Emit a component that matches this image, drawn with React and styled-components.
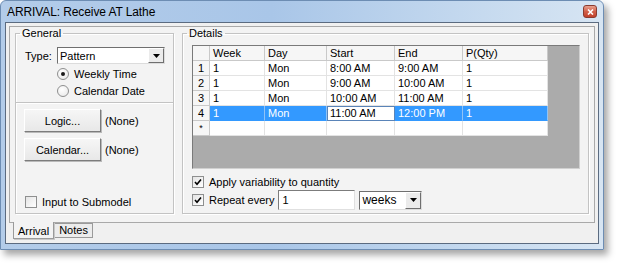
import React from 'react';
import styled, { createGlobalStyle } from 'styled-components';

const Global = createGlobalStyle`
  html, body { margin: 0; padding: 0; background: #ffffff; }
  body { font-family: "Liberation Sans", Arial, sans-serif; font-size: 11px; color: #000; }
  * { box-sizing: border-box; }
`;

const Page = styled.div`
  width: 617px;
  height: 264px;
  overflow: hidden;
`;

const Window = styled.div`
  width: 604px;
  height: 250px;
  display: flex;
  flex-direction: column;
  background: linear-gradient(90deg, #b3cce9 0%, #a9c6e8 45%, #c6daef 80%, #d7e5f3 100%);
  border: 1px solid #6d8db3;
  border-radius: 6px 6px 0 0;
  padding: 0 4px 5px 4px;
  box-shadow: 4px 5px 7px rgba(0, 0, 0, 0.35);
`;

const TitleBar = styled.div`
  height: 21px;
  display: flex;
  align-items: center;
  justify-content: space-between;
  padding: 0 2px 0 2px;
`;

const Title = styled.span`
  font-size: 12px;
  color: #000;
  letter-spacing: -0.1px;
`;

const CloseBtn = styled.div`
  width: 14px;
  height: 13px;
  border-radius: 3px;
  border: 1px solid #8a3b30;
  background: linear-gradient(180deg, #e8a08e 0%, #d2604a 50%, #c2412c 100%);
  display: flex;
  align-items: center;
  justify-content: center;
`;

const Client = styled.div`
  flex: 1;
  display: flex;
  flex-direction: column;
  background: #f0f0f0;
  border: 1px solid #5b6b80;
  padding: 3px 3px 0 3px;
`;

const Pane = styled.div`
  height: 197px;
  display: flex;
  gap: 8px;
  border: 1px solid #a9a9a9;
  background: #f3f3f3;
  padding: 0 5px 8px 5px;
`;

const Group = styled.fieldset`
  margin: 0;
  padding: 0;
  min-width: 0;
  border: 1px solid #c3c3c3;
  box-shadow: inset 1px 1px 0 #ffffff, 1px 1px 0 #ffffff;
  display: flex;
  flex-direction: column;
  width: ${p => p.$width ? `${p.$width}px` : 'auto'};
  flex: ${p => p.$width ? 'none' : '1'};
`;

const Legend = styled.legend`
  margin-left: 4px;
  padding: 0 2px;
  line-height: 13px;
  font-size: 11px;
`;

const GroupBody = styled.div`
  flex: 1;
  display: flex;
  flex-direction: column;
`;

const TypeRow = styled.div`
  margin-top: 7px;
  height: 17px;
  display: flex;
  align-items: center;
  padding-left: 9px;
`;

const FieldLabel = styled.span`
  width: 32px;
`;

const Combo = styled.div`
  width: ${p => p.$width}px;
  height: ${p => p.$height || 17}px;
  display: flex;
  align-items: center;
  background: #fff;
  border: 1px solid;
  border-color: #6f6f6f #dcdcdc #dcdcdc #6f6f6f;
  padding-left: 2px;
`;

const ComboText = styled.span`
  flex: 1;
  font-size: ${p => p.$size || 11}px;
`;

const ComboButton = styled.div`
  width: 16px;
  height: 100%;
  background: #ebebeb;
  border: 1px solid;
  border-color: #ffffff #6f6f6f #6f6f6f #ffffff;
  display: flex;
  align-items: center;
  justify-content: center;
`;

const Arrow = () => (
  <svg width="7" height="4" viewBox="0 0 7 4"><path d="M0 0H7L3.5 4Z" fill="#000" /></svg>
);

const RadioList = styled.div`
  margin-top: 1px;
  padding-left: 41px;
  display: flex;
  flex-direction: column;
`;

const OptionRow = styled.label`
  height: 17px;
  display: flex;
  align-items: center;
  gap: ${p => p.$gap || 5}px;
`;

const RadioDot = styled.span`
  width: 12px;
  height: 12px;
  border-radius: 50%;
  border: 1px solid #8e8f8f;
  background: radial-gradient(circle at 40% 35%, #ffffff 0%, #e6e6e6 100%);
  display: flex;
  align-items: center;
  justify-content: center;
  &::after {
    content: '';
    width: 4px;
    height: 4px;
    border-radius: 50%;
    background: ${p => p.$on ? '#1a1a1a' : 'transparent'};
  }
`;

const Separator = styled.div`
  margin-top: 3px;
  height: 2px;
  border-top: 1px solid #c3c3c3;
  border-bottom: 1px solid #ffffff;
`;

const ButtonRow = styled.div`
  margin-top: ${p => p.$top}px;
  padding-left: 8px;
  display: flex;
  align-items: center;
  gap: 4px;
`;

const PushButton = styled.div`
  width: 77px;
  height: 23px;
  display: flex;
  align-items: center;
  justify-content: center;
  background: linear-gradient(180deg, #f6f6f6 0%, #e8e8e8 100%);
  border: 1px solid;
  border-color: #ffffff #7c7c7c #7c7c7c #ffffff;
  box-shadow: 1px 1px 0 #b9b9b9;
`;

const Spacer = styled.div`
  flex: 1;
`;

const CheckRow = styled.label`
  height: 14px;
  display: flex;
  align-items: center;
  gap: 5px;
  padding-left: ${p => p.$left || 0}px;
  margin-bottom: ${p => p.$bottom || 0}px;
  margin-top: ${p => p.$top || 0}px;
`;

const CheckBox = styled.span`
  width: 12px;
  height: 12px;
  border: 1px solid #8e8f8f;
  background: linear-gradient(135deg, #e4e4e4 0%, #ffffff 100%);
  display: flex;
  align-items: center;
  justify-content: center;
`;

const Tick = () => (
  <svg width="8" height="8" viewBox="0 0 8 8"><path d="M1 4L3 6.2L7 1.5" stroke="#000" strokeWidth="1.6" fill="none" /></svg>
);

const GridFrame = styled.div`
  margin: 5px 8px 0 9px;
  height: 124px;
  background: #ababab;
  border: 1px solid;
  border-color: #7a7a7a #d0d0d0 #d0d0d0 #7a7a7a;
`;

const Table = styled.div`
  width: 355px;
  display: grid;
  grid-template-columns: 17px 55px 62px 68px 68px 85px;
  grid-auto-rows: 15px;
  background: #fff;
`;

const HeadCell = styled.div`
  background: #f6f6f6;
  border-right: 1px solid #c9c9c9;
  border-bottom: 1px solid #c9c9c9;
  padding-left: 3px;
  line-height: 14px;
  white-space: nowrap;
`;

const RowHead = styled.div`
  background: #f6f6f6;
  border-right: 1px solid #c9c9c9;
  border-bottom: 1px solid #c9c9c9;
  text-align: center;
  line-height: 14px;
  font-size: ${p => p.$small ? 9 : 11}px;
`;

const Cell = styled.div`
  border-right: 1px solid ${p => p.$selected ? '#8fc3f7' : '#e3e3e3'};
  border-bottom: 1px solid ${p => p.$selected ? '#3399ff' : '#e3e3e3'};
  background: ${p => p.$selected ? '#3399ff' : '#fff'};
  color: ${p => p.$selected ? '#fff' : '#000'};
  padding-left: 3px;
  line-height: 14px;
  white-space: nowrap;
  ${p => p.$editing && `
    border: 1px solid #5a84b8;
    padding-left: 2px;
    line-height: 13px;
  `}
`;

const RepeatRow = styled.div`
  margin-top: 1px;
  height: 20px;
  display: flex;
  align-items: center;
`;

const TextBox = styled.div`
  width: 77px;
  height: 20px;
  margin-left: 4px;
  background: #fff;
  border: 1px solid;
  border-color: #7c7c7c #e0e0e0 #e0e0e0 #7c7c7c;
  padding-left: 3px;
  line-height: 18px;
`;

const TabStrip = styled.div`
  display: flex;
  align-items: flex-start;
  padding-left: 4px;
`;

const Tab = styled.div`
  height: ${p => p.$active ? 17 : 15}px;
  margin-top: ${p => p.$active ? -1 : 0}px;
  padding: 0 ${p => p.$active ? 4 : 4}px;
  background: ${p => p.$active ? '#f3f3f3' : '#ececec'};
  border: 1px solid #9a9a9a;
  border-top: ${p => p.$active ? 'none' : '1px solid #9a9a9a'};
  box-shadow: ${p => p.$active ? '1px 1px 0 #c8c8c8' : 'none'};
  line-height: ${p => p.$active ? 18 : 13}px;
  font-size: 11px;
  position: relative;
  z-index: ${p => p.$active ? 1 : 0};
`;

const rows = [
  ['1', 'Mon', '8:00 AM', '9:00 AM', '1'],
  ['1', 'Mon', '9:00 AM', '10:00 AM', '1'],
  ['1', 'Mon', '10:00 AM', '11:00 AM', '1'],
  ['1', 'Mon', '11:00 AM', '12:00 PM', '1'],
];

const headers = ['Week', 'Day', 'Start', 'End', 'P(Qty)'];

export default function App() {
  return (
    <Page>
      <Global />
      <Window>
        <TitleBar>
          <Title>ARRIVAL: Receive AT Lathe</Title>
          <CloseBtn>
            <svg width="7" height="6" viewBox="0 0 7 6"><path d="M1 0.5L6 5.5M6 0.5L1 5.5" stroke="#fff" strokeWidth="1.6" /></svg>
          </CloseBtn>
        </TitleBar>
        <Client>
          <Pane>
            <Group $width={159}>
              <Legend>General</Legend>
              <GroupBody>
                <TypeRow>
                  <FieldLabel>Type:</FieldLabel>
                  <Combo $width={108}>
                    <ComboText>Pattern</ComboText>
                    <ComboButton><Arrow /></ComboButton>
                  </Combo>
                </TypeRow>
                <RadioList>
                  <OptionRow><RadioDot $on />Weekly Time</OptionRow>
                  <OptionRow><RadioDot />Calendar Date</OptionRow>
                </RadioList>
                <Separator />
                <ButtonRow $top={5}>
                  <PushButton>Logic...</PushButton>
                  <span>(None)</span>
                </ButtonRow>
                <ButtonRow $top={6}>
                  <PushButton>Calendar...</PushButton>
                  <span>(None)</span>
                </ButtonRow>
                <Spacer />
                <CheckRow $left={9} $bottom={4}>
                  <CheckBox />
                  Input to Submodel
                </CheckRow>
              </GroupBody>
            </Group>
            <Group>
              <Legend>Details</Legend>
              <GroupBody>
                <GridFrame>
                  <Table>
                    <RowHead />
                    {headers.map(h => <HeadCell key={h}>{h}</HeadCell>)}
                    {rows.map((r, i) => (
                      <React.Fragment key={i}>
                        <RowHead>{i + 1}</RowHead>
                        {r.map((v, j) => (
                          <Cell key={j} $selected={i === 3 && j !== 2} $editing={i === 3 && j === 2}>{v}</Cell>
                        ))}
                      </React.Fragment>
                    ))}
                    <RowHead $small>*</RowHead>
                    {headers.map(h => <Cell key={'n' + h} />)}
                  </Table>
                </GridFrame>
                <CheckRow $left={9} $top={6}>
                  <CheckBox><Tick /></CheckBox>
                  Apply variability to quantity
                </CheckRow>
                <RepeatRow>
                  <CheckRow $left={9}>
                    <CheckBox><Tick /></CheckBox>
                    Repeat every
                  </CheckRow>
                  <TextBox>1</TextBox>
                  <Combo $width={63} $height={19} style={{ marginLeft: 4 }}>
                    <ComboText $size={12}>weeks</ComboText>
                    <ComboButton><Arrow /></ComboButton>
                  </Combo>
                </RepeatRow>
              </GroupBody>
            </Group>
          </Pane>
          <TabStrip>
            <Tab $active>Arrival</Tab>
            <Tab>Notes</Tab>
          </TabStrip>
        </Client>
      </Window>
    </Page>
  );
}
